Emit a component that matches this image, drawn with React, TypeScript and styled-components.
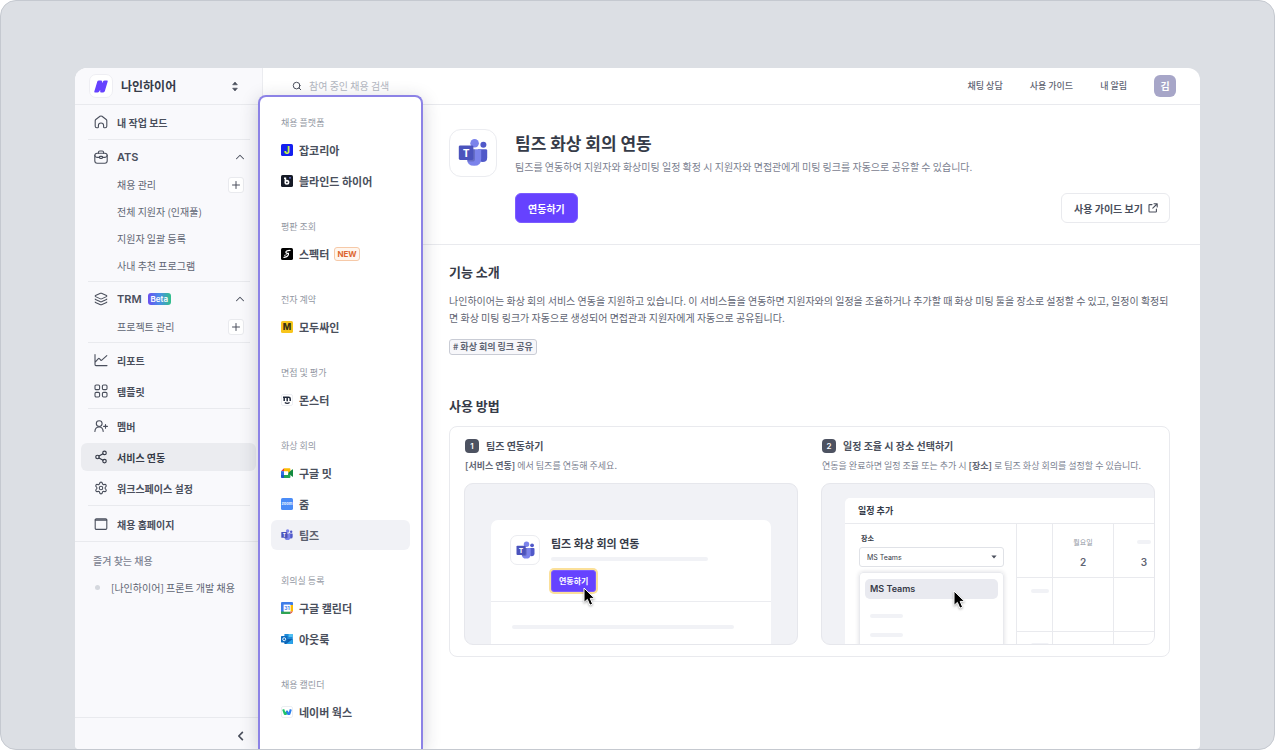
import React from "react";
import styled, { createGlobalStyle, css } from "styled-components";
import { Layers, Share2, Settings, ChevronUp, Plus, Search } from "lucide-react";

const GlobalStyle = createGlobalStyle`
  * { box-sizing: border-box; }
  body { margin: 0; background: #ffffff; }
  body, button, input, select {
    font-family: "Noto Sans CJK KR", "Noto Sans", sans-serif;
  }
  button { cursor: pointer; }
  h1, h2, h3, p, ul { margin: 0; padding: 0; }
  ul { list-style: none; }
  a { color: inherit; text-decoration: none; }
  svg { display: block; flex-shrink: 0; }
`;

/* ---------- page frame ---------- */

const Stage = styled.div`
  display: flex;
  min-height: 100vh;
  padding: 67px 74px 0;
  border: 1px solid #c5c9d0;
  border-radius: 16px;
  background: #dcdfe4;
  overflow: hidden;
`;

const Window = styled.div`
  flex: 1;
  min-width: 0;
  display: flex;
  border-radius: 12px 12px 4px 4px;
  background: #ffffff;
  overflow: hidden;
`;

/* ---------- sidebar ---------- */

const Sidebar = styled.aside`
  display: flex;
  flex-direction: column;
  width: 188px;
  flex-shrink: 0;
  background: #f9f9fc;
  border-right: 1px solid #ebecf0;
`;

const Brand = styled.div`
  display: flex;
  align-items: center;
  gap: 8px;
  height: 37px;
  padding: 0 20px 0 14px;
  border-bottom: 1px solid #e9eaee;
  color: #363b48;
  font-size: 12px;
  font-weight: 700;
  line-height: 16px;
`;

const BrandLogo = styled.span`
  display: grid;
  place-items: center;
  width: 24px;
  height: 24px;
  border: 1px solid #eeeef3;
  border-radius: 7px;
  background: #ffffff;
`;

const BrandName = styled.span`
  flex: 1;
`;

const IconButton = styled.button`
  display: grid;
  place-items: center;
  width: 14px;
  height: 16px;
  padding: 0;
  border: 0;
  background: none;
  color: #4a4f5c;
`;

const NavGroup = styled.ul<{ $nested?: boolean }>`
  display: flex;
  flex-direction: column;
  gap: ${(p) => (p.$nested ? "0" : "3px")};
  margin: 0 12px 0 13px;
  padding: 3px 0 ${(p) => (p.$nested ? "2px" : "3px")};
  border-bottom: 1px solid #e9eaee;
`;

const NavLast = styled(NavGroup)`
  margin: 0;
  padding: 4px 12px 3px 13px;
`;

const NavItem = styled.li<{ $active?: boolean }>`
  display: flex;
  align-items: center;
  height: 28px;
  margin: 0 -6px 0 -7px;
  padding: 0 9px 0 13px;
  border-radius: 6px;
  color: #4a4f5c;
  font-size: 10px;
  font-weight: 700;
  ${(p) =>
    p.$active &&
    css`
      background: #ebecf0;
      color: #363b48;
    `}
`;

const NavLink = styled.a`
  display: flex;
  align-items: center;
  flex: 1;
  gap: 9px;
`;

const Latin = styled.span`
  font-family: Inter, sans-serif;
  font-size: 11px;
  font-weight: 600;
`;

const BetaTag = styled.span`
  margin-left: -3px;
  padding: 0 3px;
  border-radius: 3px;
  background: linear-gradient(90deg, #6a4ff0, #4a8fe8 50%, #32c08a);
  color: #ffffff;
  font-family: Inter, sans-serif;
  font-size: 8px;
  font-weight: 600;
  line-height: 12px;
`;

const SubItem = styled.li`
  display: flex;
  align-items: center;
  justify-content: space-between;
  height: 27px;
  padding: 0 6px 0 29px;
  color: #5f6573;
  font-size: 10px;
`;

const AddButton = styled.button`
  display: grid;
  place-items: center;
  width: 16px;
  height: 16px;
  padding: 0;
  border: 1px solid #e9eaee;
  border-radius: 3px;
  background: #ffffff;
  color: #4a4f5c;
`;

const Favorites = styled.section`
  flex: 1;
  padding: 9px 18px;
`;

const FavTitle = styled.h2`
  color: #7b8190;
  font-size: 10px;
  font-weight: 500;
  line-height: 20px;
`;

const FavLink = styled.a`
  display: flex;
  align-items: center;
  gap: 11px;
  height: 20px;
  margin-top: 6px;
  padding-left: 2px;
  color: #5f6573;
  font-size: 10px;
  white-space: nowrap;
  &::before {
    content: "";
    width: 5px;
    height: 5px;
    border-radius: 50%;
    background: #d5d8de;
  }
`;

const SidebarFoot = styled.div`
  display: flex;
  align-items: center;
  justify-content: flex-end;
  height: 32px;
  padding: 4px 15px 0 0;
  border-top: 1px solid #e9eaee;
`;

/* ---------- right side ---------- */

const Workspace = styled.div`
  flex: 1;
  min-width: 0;
  display: flex;
  flex-direction: column;
`;

const TopBar = styled.header`
  display: flex;
  align-items: center;
  height: 37px;
  padding: 0 24px 0 29px;
  border-bottom: 1px solid #e9eaee;
`;

const SearchBox = styled.label`
  display: flex;
  align-items: center;
  flex: 1;
  gap: 7px;
  color: #4a4f5c;
`;

const SearchInput = styled.input`
  width: 160px;
  height: 18px;
  padding: 0 0 2px;
  border: 0;
  outline: 0;
  font-size: 10px;
  &::placeholder {
    color: #b3b7c1;
    opacity: 1;
  }
`;

const TopLinks = styled.nav`
  display: flex;
  align-items: center;
  gap: 27px;
  color: #5f6573;
  font-size: 9px;
  font-weight: 500;
  line-height: 14px;
`;

const Avatar = styled.button`
  width: 22px;
  height: 22px;
  padding: 0;
  border: 0;
  border-radius: 6px;
  background: #a7a6c8;
  color: #ffffff;
  font-size: 10px;
  font-weight: 700;
  line-height: 20px;
`;

const Columns = styled.div`
  flex: 1;
  display: flex;
`;

const Panel = styled.nav`
  position: relative;
  z-index: 1;
  display: flex;
  flex-direction: column;
  gap: 23px;
  width: 165px;
  flex-shrink: 0;
  margin: -10px 0 0 -5px;
  padding: 18px 11px 19px;
  border: 2px solid #8c82e6;
  border-bottom: 0;
  border-radius: 8px 8px 0 0;
  background: #ffffff;
  box-shadow: 0 4px 18px rgba(40, 42, 60, 0.22);
`;

const PanelLabel = styled.h2`
  margin-bottom: 4px;
  padding-left: 10px;
  color: #9297a3;
  font-size: 9px;
  font-weight: 400;
  line-height: 16px;
`;

const PanelList = styled.ul`
  display: flex;
  flex-direction: column;
  gap: 1px;
`;

const PanelLink = styled.a<{ $active?: boolean }>`
  display: flex;
  align-items: center;
  gap: 6px;
  height: 30px;
  padding: 0 10px;
  border-radius: 6px;
  background: ${(p) => (p.$active ? "#f1f2f6" : "transparent")};
  color: ${(p) => (p.$active ? "#5a5f6c" : "#4a4f5c")};
  font-size: 11px;
  font-weight: 700;
  line-height: 16px;
`;

const NewTag = styled.span`
  margin-left: -1px;
  padding: 0 2px;
  border: 1px solid #f6c9a8;
  border-radius: 3px;
  background: #fff6ee;
  color: #dd6630;
  font-family: Inter, sans-serif;
  font-size: 8px;
  font-weight: 700;
  line-height: 12px;
`;

const Main = styled.main`
  flex: 1;
  min-width: 0;
`;

const Hero = styled.section`
  display: flex;
  gap: 18px;
  padding: 24px 30px 21px 26px;
  border-bottom: 1px solid #e9eaee;
`;

const AppIcon = styled.span<{ $size: number }>`
  display: grid;
  place-items: center;
  flex-shrink: 0;
  width: ${(p) => p.$size}px;
  height: ${(p) => p.$size}px;
  border: 1px solid #ebecf0;
  border-radius: ${(p) => (p.$size > 40 ? 12 : 7)}px;
  background: #ffffff;
`;

const HeroBody = styled.div`
  flex: 1;
  min-width: 0;
`;

const Title = styled.h1`
  color: #363b48;
  font-size: 17px;
  font-weight: 700;
  line-height: 28px;
`;

const Lead = styled.p`
  color: #7b8190;
  font-size: 10px;
  line-height: 20px;
`;

const HeroActions = styled.div`
  display: flex;
  justify-content: space-between;
  margin-top: 16px;
`;

const PrimaryButton = styled.button`
  height: 30px;
  padding: 0 12px;
  border: 1px solid #7b5cff;
  border-radius: 6px;
  background: #6642ff;
  color: #ffffff;
  font-size: 10px;
  font-weight: 700;
`;

const GuideLink = styled.a`
  display: flex;
  align-items: center;
  gap: 5px;
  height: 30px;
  padding: 0 11px 0 12px;
  border: 1px solid #e9eaee;
  border-radius: 6px;
  color: #4a4f5c;
  font-size: 10px;
  font-weight: 700;
`;

const Details = styled.div`
  padding: 16px 30px 30px 26px;
`;

const Heading = styled.h2`
  color: #363b48;
  font-size: 13px;
  font-weight: 700;
  line-height: 22px;
`;

const Copy = styled.p`
  margin: 9px 0 13px;
  color: #5f6573;
  font-size: 10px;
  line-height: 17px;
`;

const Chip = styled.span`
  display: block;
  width: fit-content;
  margin-bottom: 40px;
  padding: 0 3px;
  border: 1px solid #c9ccd5;
  border-radius: 3px;
  background: #f7f7fa;
  color: #5f6573;
  font-size: 9px;
  font-weight: 700;
  line-height: 14px;
`;

const Steps = styled.ol`
  display: grid;
  grid-template-columns: 1fr 1fr;
  gap: 23px;
  margin: 9px 0 0;
  padding: 9px 14px 11px;
  border: 1px solid #e9eaee;
  border-radius: 8px;
  list-style: none;
`;

const Step = styled.li`
  min-width: 0;
`;

const StepTitle = styled.h3`
  display: flex;
  align-items: center;
  gap: 7px;
  padding-left: 1px;
  color: #4a4f5c;
  font-size: 10px;
  font-weight: 700;
  line-height: 20px;
`;

const StepNumber = styled.span`
  width: 14px;
  height: 14px;
  border-radius: 4px;
  background: #4d5261;
  color: #ffffff;
  font-family: Inter, sans-serif;
  font-size: 8px;
  font-weight: 600;
  line-height: 14px;
  text-align: center;
`;

const StepText = styled.p`
  margin-bottom: 7px;
  padding-left: 1px;
  color: #7b8190;
  font-size: 9px;
  line-height: 20px;
  white-space: nowrap;
  b {
    color: #5f6573;
    font-weight: 700;
  }
`;

const Scene = styled.div<{ $pad: string }>`
  position: relative;
  display: flex;
  height: 162px;
  padding: ${(p) => p.$pad};
  border: 1px solid #e6e7ec;
  border-radius: 9px;
  background: #f1f2f6;
  overflow: hidden;
`;

const Pointer = styled.svg<{ $x: number; $y: number }>`
  position: absolute;
  left: ${(p) => p.$x}px;
  top: ${(p) => p.$y}px;
  filter: drop-shadow(0 1px 1px rgba(0, 0, 0, 0.3));
`;

const Bar = styled.span<{ $width: string }>`
  display: block;
  width: ${(p) => p.$width};
  height: 4px;
  border-radius: 2px;
  background: #f1f2f6;
`;

/* ---------- first preview ---------- */

const MiniCard = styled.div`
  flex: 1;
  border-radius: 7px 7px 0 0;
  background: #ffffff;
`;

const MiniTop = styled.div`
  display: flex;
  gap: 11px;
  height: 82px;
  padding: 15px 19px 0;
  border-bottom: 1px solid #ebecf0;
`;

const MiniBody = styled.div`
  display: flex;
  flex: 1;
  flex-direction: column;
  align-items: flex-start;
`;

const MiniTitle = styled.h4`
  margin: 0 0 5px;
  color: #363b48;
  font-size: 11px;
  font-weight: 700;
  line-height: 17px;
`;

const MiniButton = styled.button`
  height: 22px;
  margin-top: 9px;
  padding: 0 7px;
  border: 1px solid #7b5cff;
  border-radius: 3px;
  background: #6642ff;
  box-shadow: 0 0 0 2px #fbe09a;
  color: #ffffff;
  font-size: 8px;
  font-weight: 700;
  line-height: 18px;
`;

const MiniRest = styled.div`
  padding: 23px 37px 0 21px;
`;

/* ---------- second preview ---------- */

const Planner = styled.div`
  flex: 1;
  min-width: 0;
  display: flex;
  flex-direction: column;
  border-radius: 5px 0 0 0;
  background: #ffffff;
`;

const PlannerTitle = styled.h4`
  margin: 0;
  padding-left: 13px;
  border-bottom: 1px solid #e9eaee;
  color: #363b48;
  font-size: 9px;
  font-weight: 700;
  line-height: 25px;
`;

const PlannerBody = styled.div`
  flex: 1;
  display: flex;
`;

const PlannerForm = styled.div`
  flex: 1;
  min-width: 0;
  padding: 9px 12px 0 14px;
`;

const FieldLabel = styled.label`
  display: block;
  padding-left: 2px;
  color: #363b48;
  font-size: 7px;
  font-weight: 700;
  line-height: 10px;
`;

const SelectWrap = styled.div`
  display: flex;
  align-items: center;
  height: 20px;
  margin: 4px 0 5px;
  padding-right: 6px;
  border: 1px solid #e0e2e7;
  border-radius: 3px;
`;

const Select = styled.select`
  flex: 1;
  padding: 0 7px;
  border: 0;
  appearance: none;
  background: transparent;
  color: #363b48;
  font-family: Inter, sans-serif;
  font-size: 7px;
`;

const Options = styled.ul`
  display: flex;
  flex-direction: column;
  gap: 15px;
  height: 100px;
  padding: 6px 5px;
  border: 1px solid #e9eaee;
  border-radius: 4px;
  box-shadow: 0 0 4px rgba(40, 42, 60, 0.16);
`;

const Option = styled.li<{ $active?: boolean }>`
  padding-left: 5px;
  border-radius: 5px;
  background: ${(p) => (p.$active ? "#e9eaf0" : "transparent")};
  color: #363b48;
  font-family: Inter, sans-serif;
  font-size: 9px;
  font-weight: 600;
  line-height: 20px;
`;

const Calendar = styled.div`
  display: grid;
  width: 138px;
  grid-template-columns: 36px 61px 61px;
  grid-template-rows: 54px 54px 54px;
  overflow: hidden;
`;

const Cell = styled.div<{ $align?: string }>`
  display: flex;
  flex-direction: column;
  align-items: ${(p) => p.$align || "center"};
  gap: 6px;
  padding: 11px 3px 0;
  border-left: 1px solid #e9eaee;
  border-bottom: 1px solid #e9eaee;
  color: #9297a3;
  font-size: 7px;
  line-height: 14px;
`;

const DayMark = styled.span`
  display: flex;
  align-items: center;
  height: 14px;
`;

const DayNumber = styled.b`
  color: #5f6573;
  font-family: Inter, sans-serif;
  font-size: 10px;
  font-weight: 600;
`;

/* ---------- drawings ---------- */

const stroke = {
  fill: "none",
  stroke: "currentColor",
  strokeWidth: 1.1,
  strokeLinecap: "round" as const,
  strokeLinejoin: "round" as const,
};

const Glyph = ({ children }: { children: React.ReactNode }) => (
  <svg width="14" height="14" viewBox="0 0 14 14" {...stroke}>
    {children}
  </svg>
);

const HomeIcon = () => (
  <Glyph>
    <path d="M1.2 5.8 Q1.2 5 1.8 4.5 L6 1.3 Q7 .6 8 1.3 L12.2 4.5 Q12.8 5 12.8 5.8 V11.2 Q12.8 12.8 11.2 12.8 H10.4 Q9.6 12.8 9.6 12 V10.4 Q9.6 8 7 8 Q4.4 8 4.4 10.4 V12 Q4.4 12.8 3.6 12.8 H2.8 Q1.2 12.8 1.2 11.2 Z" />
  </Glyph>
);

const BriefcaseIcon = () => (
  <Glyph>
    <rect x=".8" y="3.2" width="12.4" height="10" rx="2.4" />
    <path d="M4.4 3.2 V2.4 Q4.4 1 5.8 1 H8.2 Q9.6 1 9.6 2.4 V3.2 M.8 5.4 Q1.2 7.4 3 7.4 H5.4 M8.6 7.4 H11 Q12.8 7.4 13.2 5.4" />
    <rect x="5.4" y="6.4" width="3.2" height="2" rx=".8" />
  </Glyph>
);

const ReportIcon = () => (
  <Glyph>
    <path d="M1 1.6 V11.6 Q1 12.6 2 12.6 H13 M1.2 9.2 L4.4 5.6 Q4.9 5.2 5.4 5.7 L6.8 7.2 Q7.3 7.6 7.8 7.1 L12.8 2.6" />
  </Glyph>
);

const TemplateIcon = () => (
  <Glyph>
    <rect x="1" y="1" width="4.6" height="4.6" rx="1.2" />
    <rect x="8.4" y="1" width="4.6" height="4.6" rx="1.2" />
    <rect x="1" y="8.4" width="4.6" height="4.6" rx="1.2" />
    <rect x="8.4" y="8.4" width="4.6" height="4.6" rx="1.2" />
  </Glyph>
);

const MemberIcon = () => (
  <Glyph>
    <circle cx="5.2" cy="4.6" r="2.9" />
    <path d="M.9 12.4 Q1.1 8 5.2 8 Q8.8 8 9.2 12.4 M9.6 7.4 H13.4 M11.5 5.5 V9.3" />
  </Glyph>
);

const BrowserIcon = () => (
  <Glyph>
    <rect x="1.2" y="1.8" width="11.6" height="10.6" rx="1.2" />
    <path d="M1.4 3 H12.6" strokeWidth="1.4" />
  </Glyph>
);

const BrandMark = () => (
  <svg width="14" height="13" viewBox="0 0 14 13">
    <path
      d="M3.3 1.6 Q3.7 .5 4.9 .5 H7.2 Q8 .5 8 1.4 V3.2 L8.9 1.6 Q9.5 .5 10.7 .5 H13 Q14 .5 13.7 1.5 L10.8 11.3 Q10.4 12.4 9.2 12.4 H7 Q6.2 12.4 6.2 11.5 V9.7 L5.2 11.4 Q4.6 12.4 3.4 12.4 H1 Q0 12.4 .3 11.4 Z"
      fill="#6642ff"
    />
  </svg>
);

const UpDown = () => (
  <svg width="8" height="11" viewBox="0 0 8 11" fill="currentColor">
    <path
      d="M4 1 L6.4 3.8 H1.6 Z M4 10 L1.6 7.2 H6.4 Z"
      stroke="currentColor"
      strokeWidth=".6"
      strokeLinejoin="round"
    />
  </svg>
);

const ChevronLeftBold = () => (
  <svg width="7" height="10" viewBox="0 0 7 10" {...stroke} strokeWidth={1.7}>
    <path d="M5.4 1.4 L1.8 5 L5.4 8.6" />
  </svg>
);

const ExternalIcon = () => (
  <svg width="10" height="10" viewBox="0 0 10 10" {...stroke}>
    <path d="M4 1.6 H1.6 Q1 1.6 1 2.2 V8.4 Q1 9 1.6 9 H7.8 Q8.4 9 8.4 8.4 V6 M6 .8 H9.2 V4 M9 1 L4.8 5.2" />
  </svg>
);

const TeamsLogo = ({ size }: { size: number }) => (
  <svg width={size} height={size} viewBox="0 0 30 30">
    <circle cx="25.4" cy="6.8" r="3" fill="#5059c9" />
    <path d="M20 11.2 H27.8 Q29.2 11.2 29.2 12.6 V19.4 Q29.2 24 24.6 24 Q21 24 20 20.6 Z" fill="#5059c9" />
    <circle cx="16.6" cy="5.2" r="4.3" fill="#7b83eb" />
    <path d="M10 11.2 H22 Q23.2 11.2 23.2 12.4 V20.4 Q23.2 27.8 16.2 27.8 Q9 27.8 9 20.4 V12.4 Z" fill="#7b83eb" />
    <path d="M9 11.2 H17 V21 Q17 23.6 14.4 23.6 H9.6 Q9 22 9 20.4 Z" fill="#000" opacity=".16" />
    <rect x=".8" y="7.4" width="14.6" height="14.6" rx="1.4" fill="#4b53bc" />
    <text x="8.1" y="18.8" textAnchor="middle" fontFamily="Open Sans, sans-serif" fontWeight="700" fontSize="11" fill="#fff">
      T
    </text>
  </svg>
);

type TileProps = { bg: string; fg: string; label: string; size?: number; y?: number };

const Tile = ({ bg, fg, label, size = 10, y = 9.6 }: TileProps) => (
  <svg width="12" height="12" viewBox="0 0 12 12">
    <rect width="12" height="12" rx="1.6" fill={bg} />
    <text x="6" y={y} textAnchor="middle" fontFamily="Inter, sans-serif" fontWeight="800" fontSize={size} fill={fg}>
      {label}
    </text>
  </svg>
);

const BlindLogo = () => (
  <svg width="12" height="12" viewBox="0 0 12 12">
    <rect width="12" height="12" rx="1.6" fill="#151a26" />
    <path d="M3 3.2 H4.4 V6" stroke="#fff" strokeWidth="1.6" fill="none" />
    <circle cx="5.9" cy="7.3" r="1.7" stroke="#fff" strokeWidth="1.6" fill="none" />
    <circle cx="9" cy="2.8" r=".9" fill="#7a7ff0" />
  </svg>
);

const SpecterLogo = () => (
  <svg width="12" height="12" viewBox="0 0 12 12" fill="none" stroke="#fff" strokeLinecap="round">
    <rect width="12" height="12" rx="1.6" fill="#000" stroke="none" />
    <path d="M9 2.4 Q4.4 2.6 5 4.8 Q5.4 5.6 7.4 5.4 Q8 8.6 3 9.4" strokeWidth="1.2" />
    <path d="M3.4 7.4 Q5.6 7.2 5.6 6.6" strokeWidth=".8" />
  </svg>
);

const MonsterLogo = () => (
  <svg width="12" height="12" viewBox="0 0 12 12" fill="none" stroke="#20283a">
    <rect x=".5" y=".5" width="11" height="11" rx="1.6" fill="#fff" stroke="#eceef2" />
    <path d="M2 3.2 H7.6 Q9.2 3.2 9.2 4.8 V7 M3.2 3.2 V7 M6.2 3.4 V7.2" strokeWidth="1.5" />
    <path d="M3.8 8.4 Q6.2 10.2 8.6 8.4" strokeWidth="1.2" />
  </svg>
);

const MeetLogo = () => (
  <svg width="12" height="12" viewBox="0 0 12 12">
    <path d="M0 4.2 L3 1.2 V4.2 Z" fill="#e53935" />
    <path d="M3 1.2 H8.6 Q9.4 1.2 9.4 2 V4.6 L7 6 V4.2 H3 Z" fill="#fbbc04" />
    <path d="M0 4.2 H3 V8 H0 Z" fill="#2f6fe4" />
    <path d="M0 8 H3 V11 H.8 Q0 11 0 10.2 Z" fill="#1c56c4" />
    <path d="M3 8 H7 V6 L9.4 7.6 V10.2 Q9.4 11 8.6 11 H3 Z" fill="#22a455" />
    <path d="M7 6 L11.2 2.4 Q12 2 12 3 V9.2 Q12 10.2 11.2 9.6 Z" fill="#128a3e" />
  </svg>
);

const CalendarLogo = () => (
  <svg width="12" height="12" viewBox="0 0 12 12">
    <path d="M1 0 H11 Q12 0 12 1 V3 H3 V12 H1 Q0 12 0 11 V1 Q0 0 1 0 Z" fill="#3f7de8" />
    <rect x="9.4" y="3" width="2.6" height="6.4" fill="#fbbc04" />
    <path d="M0 9.4 H9.4 V12 H1 Q0 12 0 11 Z" fill="#2fa452" />
    <path d="M9.4 9.4 H12 L9.4 12 Z" fill="#e8453a" />
    <rect x="2.6" y="2.6" width="6.8" height="6.8" fill="#fff" />
    <text x="6" y="7.9" textAnchor="middle" fontFamily="Inter, sans-serif" fontWeight="700" fontSize="5" fill="#3f7de8">
      31
    </text>
  </svg>
);

const OutlookLogo = () => (
  <svg width="12" height="12" viewBox="0 0 12 12">
    <rect x="3.4" y="1" width="8.4" height="9" rx=".6" fill="#1f8ad8" />
    <rect x="7.6" y="1" width="4.2" height="3" fill="#4fc0f4" />
    <path d="M3.4 6 L11.8 6 V10.4 Q11.8 11 11.2 11 H4 Q3.4 11 3.4 10.4 Z" fill="#0f5fae" />
    <path d="M11.8 6 L5 11 H11.2 Q11.8 11 11.8 10.4 Z" fill="#2ba4ea" />
    <rect y="3" width="6.4" height="6.4" rx=".6" fill="#0d6cc0" />
    <circle cx="3.2" cy="6.2" r="1.5" fill="none" stroke="#fff" strokeWidth=".9" />
  </svg>
);

const WorksLogo = () => (
  <svg width="12" height="12" viewBox="0 0 12 12" fill="none" strokeLinejoin="round">
    <rect x=".5" y=".5" width="11" height="11" rx="1.6" fill="#fff" stroke="#eceef2" />
    <path d="M2.2 3.4 L3.8 8 H4.8 L6.2 4.8" stroke="#1fc36a" strokeWidth="2.1" />
    <path d="M5.8 4.8 L7.2 8 H8.4 L9.8 3.4" stroke="#2a7eee" strokeWidth="2.1" />
  </svg>
);

const Arrow = ({ x, y }: { x: number; y: number }) => (
  <Pointer $x={x} $y={y} width="13" height="20" viewBox="0 0 13 20">
    <path
      d="M1 1 V15.4 L4.4 12.4 L6.8 18.2 L9.6 17 L7.2 11.4 H11.6 Z"
      fill="#000"
      stroke="#fff"
      strokeWidth="1"
      strokeLinejoin="round"
    />
  </Pointer>
);

/* ---------- data ---------- */

type Service = { name: string; icon: React.ReactNode; isNew?: boolean; active?: boolean };

const services: { label: string; items: Service[] }[] = [
  {
    label: "채용 플랫폼",
    items: [
      { name: "잡코리아", icon: <Tile bg="#1420f0" fg="#c8f04a" label="J" /> },
      { name: "블라인드 하이어", icon: <BlindLogo /> },
    ],
  },
  { label: "평판 조회", items: [{ name: "스펙터", icon: <SpecterLogo />, isNew: true }] },
  {
    label: "전자 계약",
    items: [{ name: "모두싸인", icon: <Tile bg="#f8c51c" fg="#3a3212" label="M" size={9} y={9.3} /> }],
  },
  { label: "면접 및 평가", items: [{ name: "몬스터", icon: <MonsterLogo /> }] },
  {
    label: "화상 회의",
    items: [
      { name: "구글 밋", icon: <MeetLogo /> },
      { name: "줌", icon: <Tile bg="#4a8cf7" fg="#dce9ff" label="zoom" size={4} y={7.2} /> },
      { name: "팀즈", icon: <TeamsLogo size={12} />, active: true },
    ],
  },
  {
    label: "회의실 등록",
    items: [
      { name: "구글 캘린더", icon: <CalendarLogo /> },
      { name: "아웃룩", icon: <OutlookLogo /> },
    ],
  },
  { label: "채용 캘린더", items: [{ name: "네이버 웍스", icon: <WorksLogo /> }] },
];

const NavRow = ({ icon, label, active }: { icon: React.ReactNode; label: string; active?: boolean }) => (
  <NavItem $active={active}>
    <NavLink href="#">
      {icon}
      {label}
    </NavLink>
  </NavItem>
);

const Add = ({ label }: { label: string }) => (
  <AddButton type="button" aria-label={label}>
    <Plus size={12} strokeWidth={2} />
  </AddButton>
);

export default function App() {
  return (
    <>
      <GlobalStyle />
      <Stage>
        <Window>
          <Sidebar>
            <Brand>
              <BrandLogo>
                <BrandMark />
              </BrandLogo>
              <BrandName>나인하이어</BrandName>
              <IconButton type="button" aria-label="워크스페이스 전환">
                <UpDown />
              </IconButton>
            </Brand>

            <NavGroup>
              <NavRow icon={<HomeIcon />} label="내 작업 보드" />
            </NavGroup>

            <NavGroup $nested>
              <NavItem>
                <NavLink href="#">
                  <BriefcaseIcon />
                  <Latin>ATS</Latin>
                </NavLink>
                <IconButton type="button" aria-label="ATS 접기">
                  <ChevronUp size={14} strokeWidth={1.8} />
                </IconButton>
              </NavItem>
              <SubItem>
                <a href="#">채용 관리</a>
                <Add label="채용 추가" />
              </SubItem>
              <SubItem>
                <a href="#">전체 지원자 (인재풀)</a>
              </SubItem>
              <SubItem>
                <a href="#">지원자 일괄 등록</a>
              </SubItem>
              <SubItem>
                <a href="#">사내 추천 프로그램</a>
              </SubItem>
            </NavGroup>

            <NavGroup $nested>
              <NavItem>
                <NavLink href="#">
                  <Layers size={14} strokeWidth={1.8} />
                  <Latin>TRM</Latin>
                  <BetaTag>Beta</BetaTag>
                </NavLink>
                <IconButton type="button" aria-label="TRM 접기">
                  <ChevronUp size={14} strokeWidth={1.8} />
                </IconButton>
              </NavItem>
              <SubItem>
                <a href="#">프로젝트 관리</a>
                <Add label="프로젝트 추가" />
              </SubItem>
            </NavGroup>

            <NavGroup>
              <NavRow icon={<ReportIcon />} label="리포트" />
              <NavRow icon={<TemplateIcon />} label="템플릿" />
            </NavGroup>

            <NavGroup>
              <NavRow icon={<MemberIcon />} label="멤버" />
              <NavRow icon={<Share2 size={14} strokeWidth={2} />} label="서비스 연동" active />
              <NavRow icon={<Settings size={14} strokeWidth={1.9} />} label="워크스페이스 설정" />
            </NavGroup>

            <NavLast>
              <NavRow icon={<BrowserIcon />} label="채용 홈페이지" />
            </NavLast>

            <Favorites>
              <FavTitle>즐겨 찾는 채용</FavTitle>
              <FavLink href="#">[나인하이어] 프론트 개발 채용</FavLink>
            </Favorites>

            <SidebarFoot>
              <IconButton type="button" aria-label="사이드바 접기">
                <ChevronLeftBold />
              </IconButton>
            </SidebarFoot>
          </Sidebar>

          <Workspace>
            <TopBar>
              <SearchBox>
                <Search size={10} strokeWidth={2.4} />
                <SearchInput type="search" aria-label="채용 검색" placeholder="참여 중인 채용 검색" />
              </SearchBox>
              <TopLinks>
                <a href="#">채팅 상담</a>
                <a href="#">사용 가이드</a>
                <a href="#">내 알림</a>
                <Avatar type="button">김</Avatar>
              </TopLinks>
            </TopBar>

            <Columns>
              <Panel>
                {services.map((group) => (
                  <section key={group.label}>
                    <PanelLabel>{group.label}</PanelLabel>
                    <PanelList>
                      {group.items.map((item) => (
                        <li key={item.name}>
                          <PanelLink href="#" $active={item.active}>
                            {item.icon}
                            {item.name}
                            {item.isNew && <NewTag>NEW</NewTag>}
                          </PanelLink>
                        </li>
                      ))}
                    </PanelList>
                  </section>
                ))}
              </Panel>

              <Main>
                <Hero>
                  <AppIcon $size={48}>
                    <TeamsLogo size={30} />
                  </AppIcon>
                  <HeroBody>
                    <Title>팀즈 화상 회의 연동</Title>
                    <Lead>
                      팀즈를 연동하여 지원자와 화상미팅 일정 확정 시 지원자와 면접관에게 미팅 링크를 자동으로 공유할 수 있습니다.
                    </Lead>
                    <HeroActions>
                      <PrimaryButton type="button">연동하기</PrimaryButton>
                      <GuideLink href="#">
                        사용 가이드 보기
                        <ExternalIcon />
                      </GuideLink>
                    </HeroActions>
                  </HeroBody>
                </Hero>

                <Details>
                  <Heading>기능 소개</Heading>
                  <Copy>
                    나인하이어는 화상 회의 서비스 연동을 지원하고 있습니다. 이 서비스들을 연동하면 지원자와의 일정을 조율하거나 추가할 때 화상 미팅 툴을 장소로 설정할 수 있고, 일정이 확정되면 화상 미팅 링크가 자동으로 생성되어 면접관과 지원자에게 자동으로 공유됩니다.
                  </Copy>
                  <Chip># 화상 회의 링크 공유</Chip>

                  <Heading>사용 방법</Heading>
                  <Steps>
                    <Step>
                      <StepTitle>
                        <StepNumber>1</StepNumber>팀즈 연동하기
                      </StepTitle>
                      <StepText>
                        <b>[서비스 연동]</b> 에서 팀즈를 연동해 주세요.
                      </StepText>
                      <Scene $pad="36px 26px 0">
                        <MiniCard>
                          <MiniTop>
                            <AppIcon $size={30}>
                              <TeamsLogo size={19} />
                            </AppIcon>
                            <MiniBody>
                              <MiniTitle>팀즈 화상 회의 연동</MiniTitle>
                              <Bar $width="78%" />
                              <MiniButton type="button">연동하기</MiniButton>
                            </MiniBody>
                          </MiniTop>
                          <MiniRest>
                            <Bar $width="100%" />
                          </MiniRest>
                        </MiniCard>
                        <Arrow x={118} y={103} />
                      </Scene>
                    </Step>

                    <Step>
                      <StepTitle>
                        <StepNumber>2</StepNumber>일정 조율 시 장소 선택하기
                      </StepTitle>
                      <StepText>
                        연동을 완료하면 일정 조율 또는 추가 시 <b>[장소]</b> 로 팀즈 화상 회의를 설정할 수 있습니다.
                      </StepText>
                      <Scene $pad="14px 0 0 23px">
                        <Planner>
                          <PlannerTitle>일정 추가</PlannerTitle>
                          <PlannerBody>
                            <PlannerForm>
                              <FieldLabel htmlFor="place">장소</FieldLabel>
                              <SelectWrap>
                                <Select id="place" defaultValue="teams">
                                  <option value="teams">MS Teams</option>
                                </Select>
                                <svg width="6" height="4" viewBox="0 0 6 4" fill="#4a4f5c">
                                  <path d="M.4 .4 H5.6 L3 3.6 Z" />
                                </svg>
                              </SelectWrap>
                              <Options>
                                <Option $active>MS Teams</Option>
                                <Option>
                                  <Bar $width="33px" />
                                </Option>
                                <Option>
                                  <Bar $width="33px" />
                                </Option>
                              </Options>
                            </PlannerForm>
                            <Calendar>
                              <Cell />
                              <Cell>
                                <DayMark>월요일</DayMark>
                                <DayNumber>2</DayNumber>
                              </Cell>
                              <Cell>
                                <DayMark>
                                  <Bar $width="14px" />
                                </DayMark>
                                <DayNumber>3</DayNumber>
                              </Cell>
                              <Cell $align="flex-end">
                                <Bar $width="18px" />
                              </Cell>
                              <Cell />
                              <Cell />
                              <Cell $align="flex-end">
                                <Bar $width="18px" />
                              </Cell>
                              <Cell />
                              <Cell />
                            </Calendar>
                          </PlannerBody>
                        </Planner>
                        <Arrow x={131} y={106} />
                      </Scene>
                    </Step>
                  </Steps>
                </Details>
              </Main>
            </Columns>
          </Workspace>
        </Window>
      </Stage>
    </>
  );
}
